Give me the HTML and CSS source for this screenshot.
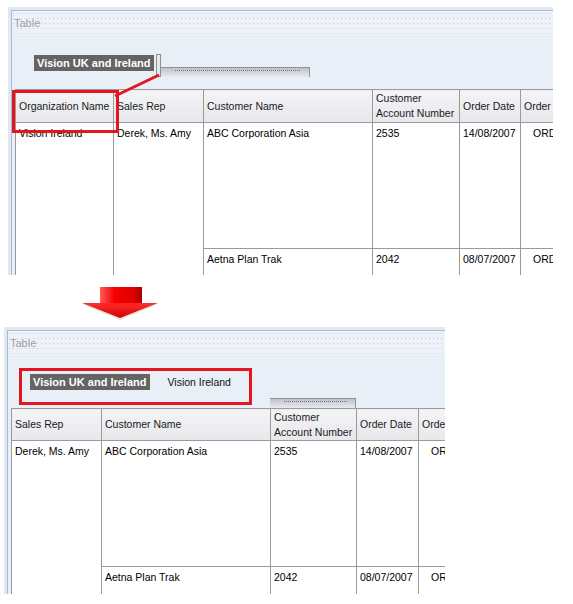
FILE: index.html
```html
<!DOCTYPE html>
<html>
<head>
<meta charset="utf-8">
<link rel="stylesheet" href="styles.css">
</head>
<body>
<div class="scene">
  <section class="panel panel-top">
    <div class="panel-inner">
      <div class="panel-title">Table</div>
      <div class="panel-body">
        <div class="groupbar">
          <span class="crumb">Vision UK and Ireland</span>
          <span class="handle"></span>
          <span class="tabbar tabbar-top"></span>
        </div>
        <table class="grid grid-top">
          <colgroup><col class="c-org"><col class="c-rep"><col class="c-cust"><col class="c-acct"><col class="c-date"><col class="c-order"></colgroup>
          <thead>
            <tr><th>Organization Name</th><th>Sales Rep</th><th>Customer Name</th><th class="wrap">Customer<br>Account Number</th><th>Order Date</th><th>Order Number</th></tr>
          </thead>
          <tbody>
            <tr class="r1"><td rowspan="2">Vision Ireland</td><td rowspan="2">Derek, Ms. Amy</td><td>ABC Corporation Asia</td><td>2535</td><td>14/08/2007</td><td class="ord">ORDER-1001</td></tr>
            <tr class="r2"><td>Aetna Plan Trak</td><td>2042</td><td>08/07/2007</td><td class="ord">ORDER-1002</td></tr>
          </tbody>
        </table>
      </div>
    </div>
  </section>

  <div class="arrow-row">
    <svg class="arrow" width="80" height="34" viewBox="0 0 80 34">
      <defs>
        <linearGradient id="ag" x1="0" y1="0" x2="1" y2="0">
          <stop offset="0" stop-color="#ff5a5a"/>
          <stop offset="0.35" stop-color="#f50000"/>
          <stop offset="0.8" stop-color="#e00000"/>
          <stop offset="1" stop-color="#a80000"/>
        </linearGradient>
        <linearGradient id="ah" x1="0" y1="0" x2="0" y2="1">
          <stop offset="0" stop-color="#ff3030"/>
          <stop offset="1" stop-color="#d00000"/>
        </linearGradient>
      </defs>
      <polygon points="2,17 78,17 40,33" fill="#c9c9c9" opacity="0.5"/>
      <rect x="20" y="0" width="42" height="17" fill="url(#ag)"/>
      <polygon points="2,16 78,16 40,31" fill="url(#ah)"/>
      <polygon points="20,16 62,16 58,19 24,19" fill="#ff2020"/>
    </svg>
  </div>

  <section class="panel panel-bottom">
    <div class="panel-inner">
      <div class="panel-title">Table</div>
      <div class="panel-body">
        <div class="groupbar groupbar-b">
          <div class="crumbs">
            <span class="crumb">Vision UK and Ireland</span>
            <span class="crumb-plain">Vision Ireland</span>
          </div>
          <span class="tabbar tabbar-bottom"></span>
        </div>
        <table class="grid grid-bottom">
          <colgroup><col class="c-rep"><col class="c-cust"><col class="c-acct2"><col class="c-date2"><col class="c-order"></colgroup>
          <thead>
            <tr><th>Sales Rep</th><th>Customer Name</th><th class="wrap">Customer<br>Account Number</th><th>Order Date</th><th>Order Number</th></tr>
          </thead>
          <tbody>
            <tr class="r1"><td rowspan="2">Derek, Ms. Amy</td><td>ABC Corporation Asia</td><td>2535</td><td>14/08/2007</td><td class="ord">ORDER-1001</td></tr>
            <tr class="r2"><td>Aetna Plan Trak</td><td>2042</td><td>08/07/2007</td><td class="ord">ORDER-1002</td></tr>
          </tbody>
        </table>
      </div>
    </div>
  </section>

  <div class="hl hl-top"></div>
  <svg class="connector" width="60" height="34" viewBox="0 0 60 34">
    <line x1="4" y1="28" x2="48" y2="7" stroke="#e3161f" stroke-width="3"/>
  </svg>
  <div class="hl hl-bottom"></div>
</div>
</body>
</html>
```

FILE: styles.css
```css
html, body {
  margin: 0;
  padding: 0;
  background: #ffffff;
}

.scene {
  position: relative;
  width: 573px;
  height: 604px;
  font-family: "Liberation Sans", Arial, sans-serif;
  font-size: 10.5px;
  color: #000;
}

.panel {
  position: relative;
  overflow: hidden;
  box-sizing: border-box;
  border-top: 3px solid #e1e8f1;
  border-left: 3px solid #e1e8f1;
}

.panel-top {
  margin: 7px 0 0 8px;
  width: 545px;
  height: 268px;
}

.panel-bottom {
  margin: 6px 0 0 4px;
  width: 441px;
  height: 267px;
}

.panel-inner {
  box-sizing: border-box;
  height: 100%;
  border-top: 1px solid #a9bcd5;
  border-left: 1px solid #a9bcd5;
  background: #e9eff7;
}

.panel-title {
  height: 24px;
  line-height: 24px;
  padding-left: 2px;
  color: #a0a0a0;
  font-size: 11px;
  background-color: #eef2f8;
  background-image: conic-gradient(from 0deg at 1px 1px, transparent 0 75%, #c4ccd7 0);
  background-size: 4px 5px;
  background-position: 1px 2px;
}

.panel-body {
  padding-left: 3px;
}

.groupbar {
  display: flex;
  align-items: flex-end;
  margin-top: 19px;
  height: 23px;
}

.crumb {
  display: inline-block;
  height: 16px;
  line-height: 16px;
  padding: 0 3px;
  margin-left: 19px;
  margin-bottom: 6px;
  background: #646464;
  color: #fff;
  font-weight: bold;
  font-size: 11px;
}

.handle {
  display: block;
  box-sizing: border-box;
  width: 5px;
  height: 23px;
  margin-left: 2px;
  border: 1px solid #8b8f96;
  background: #e4e7ec;
}

.tabbar {
  display: block;
  box-sizing: border-box;
  height: 10px;
  border-top: 1px solid #8f949d;
  border-right: 1px solid #8f949d;
  background-color: #dfe1e6;
  background-image:
    repeating-linear-gradient(90deg, #6e737c 0 1px, transparent 1px 2px),
    linear-gradient(#b9bdc5, #e9ebef);
  background-size: 100% 1px, 100% 100%;
  background-position: 0 2px, 0 0;
  background-repeat: no-repeat;
  background-origin: content-box, border-box;
  padding: 0 8px 0 14px;
}

.tabbar-top {
  width: 149px;
}

.grid {
  border-collapse: collapse;
  table-layout: fixed;
  background: #fff;
}

.grid-top {
  margin-top: 12px;
  width: 565px;
}

.grid-bottom {
  width: 468px;
}

.grid col.c-org { width: 98px; }
.grid col.c-rep { width: 90px; }
.grid col.c-cust { width: 169px; }
.grid col.c-acct { width: 87px; }
.grid col.c-date { width: 61px; }
.grid col.c-acct2 { width: 86px; }
.grid col.c-date2 { width: 62px; }
.grid col.c-order { width: 60px; }

.grid th,
.grid td {
  border: 1px solid #9a9a9a;
  text-align: left;
  white-space: nowrap;
  overflow: hidden;
  padding: 0 0 0 3px;
}

.grid th {
  height: 32px;
  font-weight: normal;
  color: #1a1a1a;
  line-height: 15px;
  vertical-align: middle;
  background: linear-gradient(#f4f4f6, #e6e8ec);
}

.grid-bottom th {
  height: 31px;
}

.grid td {
  vertical-align: top;
  line-height: 14px;
  padding-top: 3px;
}

.grid tr.r1 td {
  height: 122px;
}

.grid tr.r2 td {
  height: 40px;
}

.grid td.ord {
  padding-left: 12px;
}

.groupbar-b {
  margin-top: 19px;
  height: 34px;
  align-items: flex-start;
}

.crumbs {
  display: flex;
  align-items: center;
  width: 259px;
  flex: none;
}

.crumbs .crumb {
  margin-left: 19px;
  margin-bottom: 0;
}

.crumb-plain {
  margin-left: 18px;
  line-height: 16px;
  color: #111;
}

.tabbar-bottom {
  width: 86px;
  margin-top: 24px;
}

.arrow-row {
  height: 34px;
  margin-top: 12px;
}

.arrow {
  display: block;
  margin-left: 80px;
}

.hl {
  position: absolute;
  box-sizing: border-box;
  border: 3px solid #e3161f;
}

.hl-top {
  left: 12px;
  top: 83px;
  width: 107px;
  height: 43px;
}

.hl-bottom {
  left: 19px;
  top: 361px;
  width: 233px;
  height: 37px;
}

.connector {
  position: absolute;
  left: 111px;
  top: 61px;
}
```
